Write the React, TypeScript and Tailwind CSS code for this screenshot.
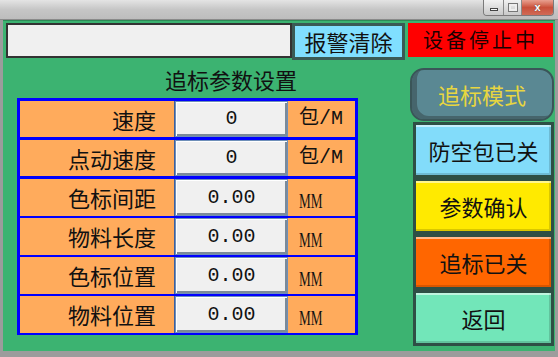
import React from "react";

const CJK = { fontFamily: '"Noto Sans CJK SC", sans-serif' };
const MONO = { fontFamily: '"Liberation Mono", "Noto Sans CJK SC", monospace' };

type Row = { label: string; value: string; unit: string };

const rows: Row[] = [
  { label: "速度", value: "0", unit: "包/M" },
  { label: "点动速度", value: "0", unit: "包/M" },
  { label: "色标间距", value: "0.00", unit: "MM" },
  { label: "物料长度", value: "0.00", unit: "MM" },
  { label: "色标位置", value: "0.00", unit: "MM" },
  { label: "物料位置", value: "0.00", unit: "MM" },
];

function SideButton({ text, bg }: { text: string; bg: string }) {
  return (
    <div
      className={`ml-[3px] h-[56px] flex items-center justify-center border-[3px] border-[#2e4f45] text-[22px] text-[#111] shadow-[inset_0_2px_0_rgba(255,255,255,0.55),inset_-2px_-2px_0_rgba(0,0,0,0.15)] ${bg}`}
      style={CJK}
    >
      {text}
    </div>
  );
}

export default function App() {
  return (
    <div className="w-[558px] h-[357px] bg-[#9c9c9c] flex flex-col overflow-hidden">
      {/* title bar */}
      <div className="h-[20px] shrink-0 bg-gradient-to-b from-[#e4e4e4] via-[#c6c6c6] to-[#bdbdbd] flex justify-end items-start pr-[4px] border-b border-[#8a8a8a]">
        <div className="flex h-[16px] rounded-b-[4px] border border-t-0 border-[#7a7a7a] overflow-hidden">
          <div className="w-[20px] h-full bg-gradient-to-b from-[#f2f2f2] to-[#c9c9c9] flex items-center justify-center border-r border-[#8a8a8a]">
            <div className="w-[8px] h-[3px] bg-[#f8f8f8] border border-[#444] mt-[4px]" />
          </div>
          <div className="w-[18px] h-full bg-gradient-to-b from-[#f2f2f2] to-[#c9c9c9] flex items-center justify-center border-r border-[#8a8a8a]">
            <div className="w-[8px] h-[7px] border-2 border-[#eee] outline outline-1 outline-[#777]" />
          </div>
          <div className="w-[31px] h-full bg-gradient-to-b from-[#e8a090] via-[#c9503a] to-[#d06a55] flex items-center justify-center">
            <span className="text-[11px] font-bold text-white leading-none" style={{ fontFamily: '"Liberation Sans", sans-serif', textShadow: "0 0 1px #333" }}>
              x
            </span>
          </div>
        </div>
      </div>

      {/* body */}
      <div className="flex-1 mx-[3px] mb-[6px] bg-[#3cb371] border-t border-[#2e8a57] flex flex-col pt-[2px] pl-[3px] pr-[1px]">
        {/* top row */}
        <div className="flex items-start">
          <div className="w-[286px] h-[35px] bg-[#f0f0f0] border-2 border-[#333]" />
          <div
            className="w-[113px] h-[37px] bg-[#80dfff] border-[3px] border-[#3a5a55] flex items-center justify-center text-[22px] text-[#111]"
            style={CJK}
          >
            报警清除
          </div>
          <div
            className="ml-[3px] w-[145px] h-[34px] bg-[#ff0000] flex items-center justify-center text-[20px] tracking-[3px] text-[#1a0000]"
            style={CJK}
          >
            设备停止中
          </div>
        </div>

        {/* lower section */}
        <div className="flex mt-[8px]">
          <div className="ml-[11px] w-[341px] flex flex-col">
            <div className="h-[30px] pl-[148px] text-[22px] leading-[22px] text-[#111]" style={CJK}>
              追标参数设置
            </div>
            <div className="border-[3px] border-[#0000ff] bg-[#0000ff] flex flex-col gap-[3px]">
              {rows.map((r) => (
                <div key={r.label} className="h-[36px] grid grid-cols-[155px_113px_1fr]">
                  <div
                    className="bg-[#ffab5c] flex items-center justify-end pr-[18px] text-[22px] text-[#111] border-r border-[#3b5fa0]"
                    style={CJK}
                  >
                    {r.label}
                  </div>
                  <div
                    className="bg-[#f0f0f0] border border-[#6f8fb8] shadow-[inset_1px_1px_0_#ffffff,inset_-2px_-2px_0_#7b8a99] flex items-center justify-center text-[20px] text-[#111]"
                    style={MONO}
                  >
                    {r.value}
                  </div>
                  <div className="bg-[#ffab5c] flex items-center pl-[11px] text-[#111]">
                    {r.unit === "MM" ? (
                      <span
                        className="inline-block text-[20px] pt-[7px] scale-x-[0.66] origin-left"
                        style={{ fontFamily: '"Liberation Serif", serif' }}
                      >
                        MM
                      </span>
                    ) : (
                      <span className="text-[20px]" style={MONO}>
                        {r.unit}
                      </span>
                    )}
                  </div>
                </div>
              ))}
            </div>
          </div>

          <div className="ml-auto w-[144px] flex flex-col">
            <div
              className="h-[53px] rounded-[14px] bg-[#5a8893] border-2 border-[#3a5558] shadow-[inset_5px_-3px_0_#46656c] flex items-center justify-center text-[22px] text-[#e8d640] mb-[1px]"
              style={CJK}
            >
              追标模式
            </div>
            <SideButton text="防空包已关" bg="bg-[#82dcfa]" />
            <SideButton text="参数确认" bg="bg-[#ffea00]" />
            <SideButton text="追标已关" bg="bg-[#ff6600]" />
            <SideButton text="返回" bg="bg-[#72e6b9]" />
          </div>
        </div>
      </div>
    </div>
  );
}
